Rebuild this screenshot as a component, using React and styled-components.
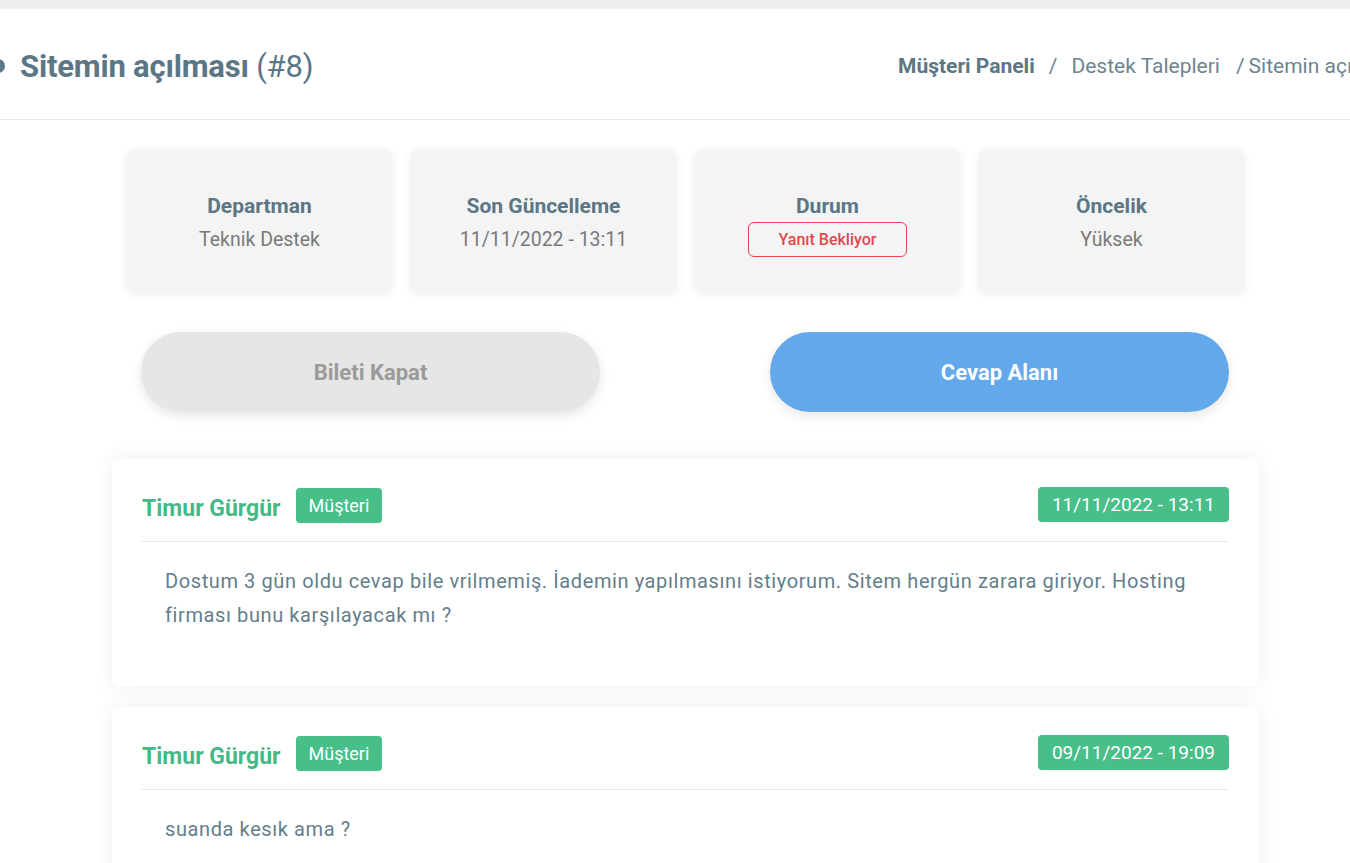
import React from 'react';
import styled, { createGlobalStyle } from 'styled-components';

const GlobalStyle = createGlobalStyle`
  * { box-sizing: border-box; }
  html, body {
    margin: 0;
    padding: 0;
    background: #ffffff;
    font-family: Roboto, "Open Sans", Arial, sans-serif;
  }
`;

const Viewport = styled.div`
  width: 100%;
  overflow: hidden;
  border-top: 9px solid #eeeeee;
`;

const Page = styled.div`
  width: 1451px;
  margin-left: -40px;
`;

const Header = styled.header`
  height: 111px;
  display: flex;
  align-items: center;
  justify-content: space-between;
  padding: 4px 0 0 31px;
  border-bottom: 1px solid #e8e8e8;
`;

const TitleWrap = styled.div`
  display: flex;
  align-items: center;
  gap: 15px;
`;

const Dot = styled.span`
  width: 14px;
  height: 14px;
  border-radius: 50%;
  background: #5d7886;
`;

const Title = styled.h1`
  margin: 0;
  font-size: 31px;
  font-weight: 700;
  color: #5b7684;
  letter-spacing: -0.2px;

  span {
    font-weight: 400;
  }
`;

const Crumbs = styled.nav`
  display: flex;
  align-items: center;
  font-size: 21px;
  color: #6d8592;
  white-space: nowrap;
  width: 513px;
  overflow: hidden;
`;

const Crumb = styled.span`
  font-weight: ${(p) => (p.$strong ? 700 : 400)};
  color: ${(p) => (p.$strong ? '#5b7684' : '#6d8592')};
`;

const Sep = styled.span`
  margin: 0 ${(p) => p.$right || 14}px 0 ${(p) => p.$left || 14}px;
`;

const Content = styled.main`
  width: 1147px;
  margin: 0 auto;
  padding-top: 29px;
`;

const StatGrid = styled.div`
  display: grid;
  grid-template-columns: repeat(4, 265px);
  justify-content: space-between;
  padding: 0 15px;
`;

const StatCard = styled.div`
  height: 143px;
  background: #f4f4f4;
  border-radius: 8px;
  box-shadow: 0 2px 10px rgba(0, 0, 0, 0.08);
  display: flex;
  flex-direction: column;
  align-items: center;
  padding-top: 44px;
`;

const StatLabel = styled.div`
  font-size: 21px;
  font-weight: 700;
  color: #5b7684;
  line-height: 26px;
`;

const StatValue = styled.div`
  font-size: 19.5px;
  color: #7a7a7a;
  line-height: 26px;
  margin-top: 8px;
`;

const StatusBadge = styled.div`
  margin-top: 3px;
  width: 159px;
  height: 35px;
  border: 1px solid #e2474b;
  border-radius: 6px;
  color: #e2474b;
  font-size: 16px;
  font-weight: 500;
  display: flex;
  align-items: center;
  justify-content: center;
`;

const Actions = styled.div`
  display: flex;
  justify-content: space-between;
  padding: 0 30px 0 29px;
  margin-top: 40px;
`;

const ActionButton = styled.button`
  width: 459px;
  height: 80px;
  border: none;
  border-radius: 40px;
  font-family: inherit;
  font-size: 22px;
  font-weight: 700;
  cursor: pointer;
  background: ${(p) => (p.$primary ? '#62a8ea' : '#e6e6e6')};
  color: ${(p) => (p.$primary ? '#ffffff' : '#9a9a9a')};
  box-shadow: 0 4px 12px rgba(0, 0, 0, 0.1);
`;

const Messages = styled.section`
  margin-top: 47px;
  display: flex;
  flex-direction: column;
  gap: 21px;
`;

const MessageCard = styled.article`
  background: #ffffff;
  border-radius: 8px;
  box-shadow: 0 0 22px rgba(0, 0, 0, 0.07);
  padding: 27px 30px 54px;
`;

const MessageHead = styled.div`
  display: flex;
  align-items: center;
  justify-content: space-between;
  padding-bottom: 18px;
  border-bottom: 1px solid #e8e8e8;
`;

const Author = styled.div`
  display: flex;
  align-items: center;
  gap: 15px;
  padding-top: 2px;
`;

const AuthorName = styled.span`
  font-size: 23px;
  font-weight: 700;
  color: #46b886;
  margin-top: 5px;
`;

const GreenTag = styled.span`
  background: #48be89;
  color: #ffffff;
  border-radius: 4px;
  height: 35px;
  padding: 0 ${(p) => p.$pad || 13}px;
  display: inline-flex;
  align-items: center;
  font-size: ${(p) => p.$size || 18}px;
`;

const MessageBody = styled.p`
  margin: 22px 0 0;
  padding-left: 23px;
  font-size: 20px;
  letter-spacing: 0.6px;
  line-height: 34px;
  color: #647e8b;
`;

const stats = [
  { label: 'Departman', value: 'Teknik Destek' },
  { label: 'Son Güncelleme', value: '11/11/2022 - 13:11' },
  { label: 'Durum', badge: 'Yanıt Bekliyor' },
  { label: 'Öncelik', value: 'Yüksek' },
];

const messages = [
  {
    id: 1,
    author: 'Timur Gürgür',
    role: 'Müşteri',
    date: '11/11/2022 - 13:11',
    text: 'Dostum 3 gün oldu cevap bile vrilmemiş. İademin yapılmasını istiyorum. Sitem hergün zarara giriyor. Hosting firması bunu karşılayacak mı ?',
  },
  {
    id: 2,
    author: 'Timur Gürgür',
    role: 'Müşteri',
    date: '09/11/2022 - 19:09',
    text: 'suanda kesık ama ?',
  },
];

const App = () => (
  <>
    <GlobalStyle />
    <Viewport>
      <Page>
        <Header>
          <TitleWrap>
            <Dot />
            <Title>
              Sitemin açılması <span>(#8)</span>
            </Title>
          </TitleWrap>
          <Crumbs>
            <Crumb $strong>Müşteri Paneli</Crumb>
            <Sep>/</Sep>
            <Crumb>Destek Talepleri</Crumb>
            <Sep $left={16} $right={4}>/</Sep>
            <Crumb>Sitemin açılması</Crumb>
          </Crumbs>
        </Header>

        <Content>
          <StatGrid>
            {stats.map((s) => (
              <StatCard key={s.label}>
                <StatLabel>{s.label}</StatLabel>
                {s.badge ? (
                  <StatusBadge>{s.badge}</StatusBadge>
                ) : (
                  <StatValue>{s.value}</StatValue>
                )}
              </StatCard>
            ))}
          </StatGrid>

          <Actions>
            <ActionButton>Bileti Kapat</ActionButton>
            <ActionButton $primary>Cevap Alanı</ActionButton>
          </Actions>

          <Messages>
            {messages.map((m) => (
              <MessageCard key={m.id}>
                <MessageHead>
                  <Author>
                    <AuthorName>{m.author}</AuthorName>
                    <GreenTag>{m.role}</GreenTag>
                  </Author>
                  <GreenTag $size={19} $pad={14}>{m.date}</GreenTag>
                </MessageHead>
                <MessageBody>{m.text}</MessageBody>
              </MessageCard>
            ))}
          </Messages>
        </Content>
      </Page>
    </Viewport>
  </>
);

export default App;
